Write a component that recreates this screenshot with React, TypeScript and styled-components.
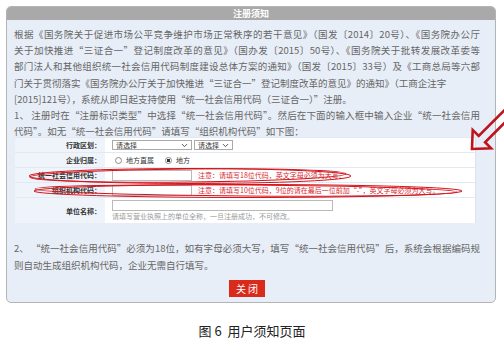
import React from "react";
import styled, { createGlobalStyle } from "styled-components";
import { ChevronDown } from "lucide-react";

const GlobalStyle = createGlobalStyle`
  body {
    margin: 0;
    background: white;
    font-family: "Noto Sans CJK SC", "Noto Sans", sans-serif;
  }
`;

const introLines = [
    "根据《国务院关于促进市场公平竞争维护市场正常秩序的若干意见》（国发〔2014〕20号）、《国务院办公厅",
    "关于加快推进“三证合一”登记制度改革的意见》（国办发〔2015〕50号）、《国务院关于批转发展改革委等",
    "部门法人和其他组织统一社会信用代码制度建设总体方案的通知》（国发〔2015〕33号）及《工商总局等六部",
    "门关于贯彻落实《国务院办公厅关于加快推进“三证合一”登记制度改革的意见》的通知》（工商企注字",
    "[2015]121号），系统从即日起支持使用“统一社会信用代码（三证合一）”注册。",
    "1、 注册时在“注册标识类型”中选择“统一社会信用代码”。然后在下面的输入框中输入企业“统一社会信用",
    "代码”。如无“统一社会信用代码”请填写“组织机构代码”如下图：",
];
const raggedIntro = [3, 4, 6];

const outroLines = [
    "2、 “统一社会信用代码”必须为18位，如有字母必须大写，填写“统一社会信用代码”后，系统会根据编码规",
    "则自动生成组织机构代码，企业无需自行填写。",
];

export default function App() {
    return (
        <Page>
            <GlobalStyle/>
            <Panel>
                <Header>注册须知</Header>
                <Body>
                    <Text>
                        {introLines.map((line, i) => (
                            <Line key={line} $fill={!raggedIntro.includes(i)}>{line}</Line>
                        ))}
                    </Text>
                    <FormTable>
                        <Row>
                            <Label>行政区划：</Label>
                            <Value>
                                <Select $width={80}>请选择<ChevronDown size={9} strokeWidth={2.2}/></Select>
                                <Select $width={39}>请选择<ChevronDown size={9} strokeWidth={2.2}/></Select>
                            </Value>
                        </Row>
                        <Row>
                            <Label>企业归属：</Label>
                            <Value>
                                <Radio/>
                                <RadioText>地方直属</RadioText>
                                <Radio $checked/>
                                <RadioText>地方</RadioText>
                            </Value>
                        </Row>
                        <Row>
                            <Label>统一社会信用代码：</Label>
                            <Value>
                                <Input $width={80}/>
                                <Note>注意：请填写18位代码，英文字母必须为大写。</Note>
                            </Value>
                        </Row>
                        <Row>
                            <Label>组织机构代码：</Label>
                            <Value>
                                <Input $width={80}/>
                                <Note>注意：请填写10位代码，9位的请在最后一位前加“-”，英文字母必须为大写。</Note>
                            </Value>
                        </Row>
                        <Row $tall>
                            <Label>单位名称：</Label>
                            <StackValue>
                                <Input $width={221}/>
                                <Hint>请填写营业执照上的单位全称，一旦注册成功，不可修改。</Hint>
                            </StackValue>
                        </Row>
                    </FormTable>
                    <Outro>
                        <Line $fill>{outroLines[0]}</Line>
                        <Line>{outroLines[1]}</Line>
                    </Outro>
                    <ButtonBar>
                        <CloseButton type="button">关闭</CloseButton>
                    </ButtonBar>
                </Body>
            </Panel>
            <Caption>图 6&nbsp;&nbsp;用户须知页面</Caption>
            <Markup width="504" height="339" viewBox="0 0 504 339">
                <g fill="none" stroke="#d3141c" strokeWidth="1">
                    <ellipse cx="190" cy="176" rx="161" ry="7.5"/>
                    <ellipse cx="188" cy="175.5" rx="158" ry="6.5" transform="rotate(-0.6 188 175.5)"/>
                    <ellipse cx="248" cy="191" rx="214" ry="6.5"/>
                    <ellipse cx="246" cy="190.5" rx="211" ry="5.5" transform="rotate(0.4 246 190.5)"/>
                </g>
                <polygon
                    points="0,0 14,-13 14,-4.5 60,-4.5 60,4.5 14,4.5 14,13"
                    transform="translate(472 149) rotate(-45)"
                    fill="none"
                    stroke="#c0141c"
                    strokeWidth="2.6"
                    strokeLinejoin="miter"
                />
            </Markup>
        </Page>
    );
}

const Page = styled.div`
  position: relative;
  width: 504px;
  height: 339px;
  overflow: hidden;
  background: white;
`;

const Panel = styled.div`
  box-sizing: border-box;
  width: 490px;
  height: 297px;
  margin: 6px 0 0 6px;
  border: 1px solid #b4b4b4;
  border-radius: 5px;
  background: #e8eef7;
  overflow: hidden;
`;

const Header = styled.div`
  height: 13px;
  background: #a9a9a9;
  color: white;
  font-size: 9px;
  font-weight: 700;
  line-height: 13px;
  text-align: center;
`;

const Body = styled.div`
  padding: 6px 7px 0 7px;
`;

const Text = styled.div`
  width: 466px;
  color: #666;
  font-size: 9.5px;
  line-height: 16.2px;
`;

const Line = styled.div<{ $fill?: boolean }>`
  white-space: nowrap;
  text-align: ${p => (p.$fill ? "justify" : "left")};
  text-align-last: ${p => (p.$fill ? "justify" : "auto")};
`;

const FormTable = styled.div`
  width: 460px;
  margin: -2px 0 0 1px;
  background: white;
  border-right: 1px solid #dde3ea;
`;

const Row = styled.div<{ $tall?: boolean }>`
  display: flex;
  height: ${p => (p.$tall ? 26 : 15)}px;
  border-top: 1px solid #e3e9f1;
  box-sizing: border-box;
`;

const Label = styled.div`
  width: 90px;
  flex: none;
  box-sizing: border-box;
  padding-right: 4px;
  background: #eff4fb;
  color: #333;
  font-size: 7px;
  font-weight: 700;
  display: flex;
  align-items: center;
  justify-content: flex-end;
`;

const Value = styled.div`
  flex: 1;
  display: flex;
  align-items: center;
  gap: 2px;
  padding-left: 7px;
`;

const StackValue = styled.div`
  flex: 1;
  display: flex;
  flex-direction: column;
  justify-content: center;
  gap: 1px;
  padding-left: 7px;
`;

const Select = styled.div<{ $width: number }>`
  box-sizing: border-box;
  width: ${p => p.$width}px;
  height: 10px;
  border: 1px solid #a9a9a9;
  padding: 0 2px 0 3px;
  display: flex;
  align-items: center;
  justify-content: space-between;
  color: #333;
  font-size: 7px;
  line-height: 8px;
`;

const Radio = styled.span<{ $checked?: boolean }>`
  box-sizing: border-box;
  width: 7px;
  height: 7px;
  margin-left: 3px;
  border-radius: 50%;
  border: 1px solid #8a8a8a;
  background: ${p => (p.$checked ? "radial-gradient(circle, #333 0 1.5px, white 2px)" : "white")};
`;

const RadioText = styled.span`
  margin: 0 6px 0 2px;
  color: #333;
  font-size: 7px;
`;

const Input = styled.div<{ $width: number }>`
  box-sizing: border-box;
  width: ${p => p.$width}px;
  height: 11px;
  border: 1px solid #b9b9b9;
  background: white;
`;

const Note = styled.span`
  margin-left: 4px;
  color: #d6282e;
  font-size: 7px;
  white-space: nowrap;
`;

const Hint = styled.span`
  color: #9a9a9a;
  font-size: 7px;
  line-height: 9px;
  white-space: nowrap;
`;

const Outro = styled(Text)`
  margin-top: 17px;
`;

const ButtonBar = styled.div`
  display: flex;
  justify-content: center;
  margin-top: 7px;
  padding-right: 8px;
`;

const CloseButton = styled.button`
  width: 36px;
  height: 17px;
  padding: 0;
  border: none;
  background: #da2a1c;
  color: white;
  font-family: "Noto Sans CJK SC", sans-serif;
  font-size: 10px;
  letter-spacing: 2px;
  text-indent: 2px;
`;

const Caption = styled.div`
  margin-top: 20px;
  color: #222;
  font-size: 13px;
  line-height: 15px;
  text-align: center;
`;

const Markup = styled.svg`
  position: absolute;
  left: 0;
  top: 0;
  pointer-events: none;
`;
